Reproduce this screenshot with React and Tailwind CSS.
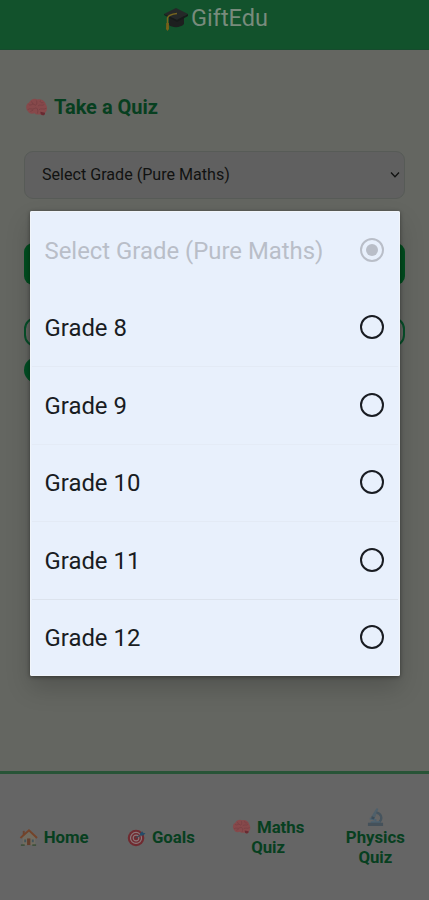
import React from "react";

function Brain({ className }) {
  return (
    <svg viewBox="0 0 24 20" className={className} fill="none">
      <path d="M3 14C0 11 1 6 4 5C6 1 10 0 13 1.5C17 .5 21 3 22 7C24 10 23 14 21 15.5C21 18 18 19 16 17C13 18 11 17 10 16C7 17 4 16.500 3 14Z" fill="#87494b" />
      <path d="M16 14.500L21 15.500C21 18.500 18.500 19 16.500 17.200Z" fill="#682b32" />
      <path d="M4 7C6 9 8 5 10 7S13 5 12 3M3 12C6 10 7 13 10 11S14 13 13 16M14 8C16 6 18 9 20 7M15 12C17 10 19 13 22 11M16 3C15 5 18 5 19 5M7 4L8 6M6 14L8 13" stroke="#743e42" strokeWidth="0.800" strokeLinecap="round" />
    </svg>
  );
}

function Cap() {
  return (
    <svg viewBox="0 0 26 26" className="h-[26px] w-[26px] shrink-0">
      <path d="M6 10V20C9 23 18 23 21 19V10Z" fill="#1d1f1f" />
      <path d="M1 9L13 3L25 9L14 15Z" fill="#252828" />
      <path d="M14 15L25 9V11L14 17L1 10V9Z" fill="#171b1a" />
      <path d="M14 8.500C9 9 5 11 4.500 13V20" fill="none" stroke="#77651f" strokeWidth="1.500" />
      <path d="M3.300 18H5.800L6 24L4.500 26L3 24Z" fill="#796018" />
    </svg>
  );
}

function House() {
  return (
    <svg viewBox="0 0 20 20" className="h-[19px] w-[19px] shrink-0">
      <path d="M4 3H6V8H4Z" fill="#6b4430" />
      <path d="M4 9L10.500 4L17 9V18H4Z" fill="#716c60" />
      <path d="M1.500 10.500L10.500 2.500L19 10.500" fill="none" stroke="#744329" strokeWidth="2" />
      <path d="M8.500 11H12V18H8.500Z" fill="#633d2b" />
      <path d="M5.500 12H7.500V15H5.500ZM13.500 12H15.500V15H13.500Z" fill="#42545b" />
      <path d="M2 17H6V19H2ZM14 17H18V19H14Z" fill="#40513d" />
    </svg>
  );
}

function Target() {
  return (
    <svg viewBox="0 0 20 20" className="h-[19px] w-[19px] shrink-0">
      <circle cx="9.500" cy="10.500" r="8.700" fill="#702a30" />
      <circle cx="9.500" cy="10.500" r="5.800" fill="none" stroke="#8b7678" strokeWidth="1.300" />
      <circle cx="9.500" cy="10.500" r="3" fill="none" stroke="#8b7678" strokeWidth="1.200" />
      <path d="M9.500 10.500L16 6" stroke="#354b58" strokeWidth="1.200" />
      <path d="M13.500 6L16 3.500L17 5L19.500 5.500L17 8L14.500 8Z" fill="#234c69" />
    </svg>
  );
}

function Microscope() {
  return (
    <svg viewBox="0 0 20 21" className="h-[20px] w-[19px]" fill="none">
      <path d="M11.500 1L13 2L9.500 11L6 9.500L10.500 2Z" fill="#4f606b" />
      <path d="M11 6C16 7 18 12 14 16" stroke="#46545e" strokeWidth="2.400" />
      <path d="M4 12L11 14M5 16H15" stroke="#4c6170" strokeWidth="2" />
      <path d="M2 16.500H18V20H2Z" fill="#45515a" />
      <path d="M6 9.500L9.500 11L8 13L5.500 12Z" fill="#3b4d5a" />
    </svg>
  );
}

function Option({ label, disabled, divider }) {
  return (
    <div className={"relative flex flex-1 items-center justify-between pl-[14.500px] pr-4 text-[23.9px] " + (disabled ? "text-[#b9bec8]" : "text-[#191c22]")}>
      {divider && <div className={"absolute inset-x-[2px] top-0 h-px " + divider} />}
      <span className="relative top-[2px] whitespace-nowrap">{label}</span>
      <span className={"flex h-6 w-6 shrink-0 items-center justify-center rounded-full border-2 " + (disabled ? "border-[#b9bec8]" : "border-[#191c22]")}>
        {disabled && <span className="h-3 w-3 rounded-full bg-[#b9bec8]" />}
      </span>
    </div>
  );
}

export default function App() {
  return (
    <div className="relative flex h-[900px] w-[429px] flex-col overflow-hidden bg-[#646661] font-['Roboto',sans-serif]">
      <header className="flex h-[50px] shrink-0 justify-center border-b border-[#164b2d] bg-[#12522c]">
        <div className="flex h-[36px] items-center pl-[2px] text-[23.5px] text-[#788b7c]">
          <span className="-mt-px flex"><Cap /></span>
          <span className="ml-[2px] mt-[2px]">GiftEdu</span>
        </div>
      </header>

      <main className="flex flex-1 flex-col px-6">
        <h1 className="mt-[42px] flex h-[30px] items-center pl-[1px] text-[20px] font-bold text-[#073f20]">
          <Brain className="mr-[6px] h-[19px] w-[23px]" />
          Take a Quiz
        </h1>
        <div className="mt-[29px] flex h-[48px] shrink-0 items-center justify-between rounded-[9px] border border-[#575b57] bg-[#606060] pl-[17px] pr-[4px] text-[16.100px] text-[#111211]">
          <span>Select Grade (Pure Maths)</span>
          <svg viewBox="0 0 10 8" className="h-[8px] w-[10px]" fill="none" stroke="#111211" strokeWidth="1.300">
            <path d="M1 1.500L5 5.800L9 1.500" />
          </svg>
        </div>
        <div className="mt-[44px] h-[42px] shrink-0 rounded-[9px] bg-[#014f20]" />
        <div className="mt-[32px] h-[30px] shrink-0 rounded-[12px] border-2 border-[#07502a]" />
        <div className="mt-[10px] h-[26px] w-[140px] shrink-0 rounded-[13px] bg-[#014f24]" />
      </main>

      <nav className="grid h-[129px] shrink-0 grid-cols-4 items-center border-t-[3px] border-[#285437] bg-[#656565] text-[16.800px] leading-[20px] font-bold text-[#073f20]">
        <div className="flex items-center justify-center gap-[6px]"><House />Home</div>
        <div className="flex items-center justify-center gap-[6px]"><Target />Goals</div>
        <div className="flex flex-col items-center">
          <span className="flex items-center gap-[6px]"><Brain className="h-[16px] w-[19px]" />Maths</span>
          <span>Quiz</span>
        </div>
        <div className="flex flex-col items-center"><Microscope /><span>Physics</span><span>Quiz</span></div>
      </nav>

      <div className="absolute left-[30px] top-[211px] flex h-[465px] w-[370px] flex-col rounded-[2px] bg-[#e8f0fc] shadow-[inset_0_0_0_1px_#f1f5fa,0_12px_24px_rgba(0,0,0,0.18),0_1px_4px_rgba(0,0,0,0.4)]">
        <Option label="Select Grade (Pure Maths)" disabled />
        <Option label="Grade 8" />
        <Option label="Grade 9" divider="bg-[#e3eaf5]" />
        <Option label="Grade 10" divider="bg-[#e4ebf6]" />
        <Option label="Grade 11" divider="bg-[#e3eaf5]" />
        <Option label="Grade 12" divider="bg-[#dce3ed]" />
      </div>
    </div>
  );
}
